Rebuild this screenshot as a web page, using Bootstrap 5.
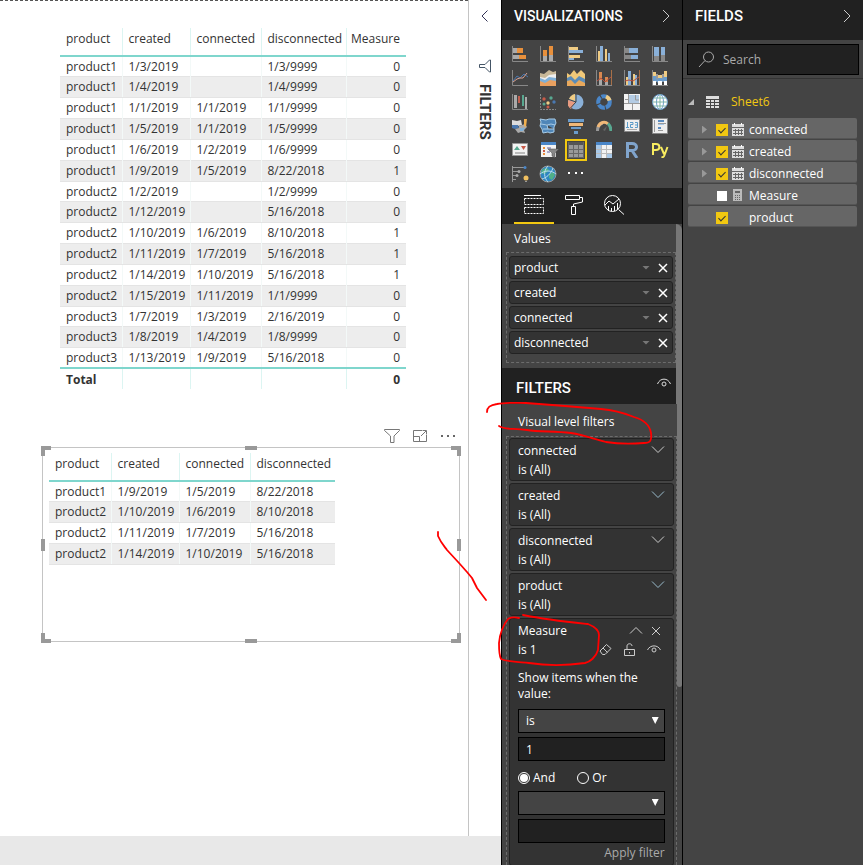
<!DOCTYPE html>
<html lang="en">
<head>
<meta charset="utf-8">
<meta name="viewport" content="width=device-width, initial-scale=1">
<title>Report editor</title>
<link href="https://cdn.jsdelivr.net/npm/bootstrap@5.3.0/dist/css/bootstrap.min.css" rel="stylesheet">
<style>
body{font-family:"Open Sans","Noto Sans",sans-serif;font-size:12px;line-height:16px;color:#333;background:#fff}
button{font:inherit;color:inherit;background:none;border:0;padding:0}
svg{display:block;flex:none}
.pane-title{font-family:Roboto,sans-serif;font-weight:500;font-size:15px;line-height:20px;margin:0;color:#fff}
.title-long{font-size:14px}

/* report canvas */
.report{min-width:0}
.canvas{border-top:1px dashed #555;padding:27px 8px 0 42px;min-width:0}
.strip{width:33px;border-left:1px solid #c4c4c4;color:#333}
.strip .pane-title{writing-mode:vertical-rl;color:#333;line-height:20px;font-weight:700}
.strip-funnel{margin:34px 0 10px}
.pages{height:29px;background:#e8e8e8}
.grid-table{width:auto;table-layout:fixed;margin:0;color:#333;line-height:16px;--bs-table-bg:transparent}
.grid-table>:not(caption)>*>*{padding:1px 3px 0 6px;border-bottom:0;height:21px;white-space:nowrap;box-shadow:none;color:#333;vertical-align:middle;border-right:1px solid #f3f9f8}
.grid-table>:not(caption)>*>.text-end{padding-left:3px;padding-right:6px}
.grid-table>:not(caption)>*>:last-child{border-right:0}
.grid-table>thead>tr>th{height:28px;padding-top:0;padding-bottom:5px;font-weight:400;border-bottom:2px solid #7fd6cd;border-right-color:#dcf5f2}
.grid-table>tbody>tr:nth-child(6n+1)>td{height:20px}
.grid-table>tbody>tr:nth-child(even)>td{background:#ededed;border-top:1px solid #e4e4e4;border-bottom:1px solid #e4e4e4;padding-top:0}
.grid-table>tfoot>tr>*{border-top:2px solid #7fd6cd;font-weight:700;border-right-color:#dcf5f2}
.w-a{width:62px}.w-b{width:68px}.w-c{width:71px}.w-d{width:85px}.w-e{width:60px}
.main-visual{margin-left:18px}
.visual-tools{margin-top:35px;height:23px;padding-right:4px;gap:13px}
.visual{position:relative;border:1px solid #c4c4c4;height:195px;padding:5px 6px}
.handle{position:absolute;background:#999}
.h-t{width:12px;height:4px;left:calc(50% - 6px);top:-2px}
.h-b{width:12px;height:4px;left:calc(50% - 6px);bottom:-2px}
.h-l{width:4px;height:12px;top:calc(50% - 6px);left:-2px}
.h-r{width:4px;height:12px;top:calc(50% - 6px);right:-2px}
.corner{position:absolute;width:10px;height:10px;border:0 solid #999}
.c-tl{left:-2px;top:-2px;border-width:4px 0 0 4px}
.c-tr{right:-2px;top:-2px;border-width:4px 4px 0 0}
.c-bl{left:-2px;bottom:-2px;border-width:0 0 4px 4px}
.c-br{right:-2px;bottom:-2px;border-width:0 4px 4px 0}

/* dark panes */
.pane{background:#444;color:#fff;border-left:1px solid #000;overflow:hidden}
.viz{width:181px}
.fields{width:181px}
.pane-head{height:40px;background:#212121;padding:0 12px;flex:none}
.sub-head{height:36px;padding:4px 5px 0 14px}
.viz-grid{display:grid;grid-template-columns:repeat(6,28px);grid-auto-rows:24px;padding:2px 4px;height:148px}
.viz-grid button{display:flex;align-items:center;justify-content:center}
.viz-grid .picked svg{outline:2px solid #f2c811;outline-offset:1px;background:#333}
.tabs{height:36px;background:#212121;padding-left:12px}
.tabs button{width:40px;border-bottom:2px solid transparent;display:flex;align-items:center;justify-content:center}
.tabs .on{border-color:#f2c811}
.scroller{border-right:6px solid #777}
.scroller-start{border-top-right-radius:6px}
.values-label{margin:0;padding:7px 12px 5px}
.level-label{margin:0;padding:10px 16px 6px}
.well{border:1px dashed #6c6c6c;margin:0 0 5px 4px;padding:3px 2px 6px}
.chip{height:23px;background:#333;border:1px solid #222;border-radius:3px;padding:0 4px;margin-bottom:2px}
.caret{width:8px;height:4px;background:#777;clip-path:polygon(0 0,100% 0,50% 100%)}
.fcard{background:#333;border:1px solid #222;border-radius:3px;padding:2px 8px;line-height:19px;height:43px;margin-bottom:2px}
.fcard.open{height:auto;flex:1 0 auto;margin:0}
.fwell{border:1px dashed #6c6c6c;border-bottom:0;margin:0 0 0 4px;padding:1px 2px 0;min-height:0}
.prompt{margin:11px 0 7px;line-height:16px}
.box{display:block;width:100%;height:24px;border:1px solid #000;border-radius:0;background:#212121;color:#fff;padding:0 7px;font-size:12px;line-height:22px;appearance:none}
.pick{position:relative;margin-bottom:4px}
.pick .box{background:#444}
.pick::after{content:"";position:absolute;right:6px;top:8px;width:7px;height:7px;background:#fff;clip-path:polygon(0 0,100% 0,50% 100%);pointer-events:none}
.join{padding:9px 0 5px;line-height:16px}
.join label{padding:0 22px 0 3px}
.rad{appearance:none;width:12px;height:12px;border:1px solid #fff;border-radius:50%;margin:0;flex:none}
.rad:checked{background:#fff;background-clip:content-box;padding:1px}
.apply{color:#aaa;line-height:20px}
.bar-rest{width:6px;background:#777;height:283px;border-radius:0 0 3px 3px}

.search{margin:4px 4px 3px;height:31px;background:#212121;border:1px solid #000;padding:0 10px}
.search input{background:none;border:0;outline:0;color:#fff;min-width:0;flex:1;padding:0;font-size:12px}
.search input::placeholder{color:#aaa;opacity:1}
.fields-body{border-top:1px solid #333;padding:11px 6px 0 5px}
.sheet{color:#f2c811;height:24px}
.item{height:21px;background:#666;border-radius:2px;border-bottom:1px solid #555;margin-bottom:1px;padding:3px 0 0 14px}
.item>svg,.slot12{margin:0 5px 0 4px}
.twist{width:5px;height:8px;background:#999;clip-path:polygon(0 0,100% 50%,0 100%)}
.slot5{width:5px}.slot12{width:12px}
.tick{appearance:none;width:12px;height:12px;margin:0 0 0 9px;background:#fff;flex:none;display:flex;justify-content:center}
.tick:not(:checked){width:10px;height:10px;margin:0 1px 0 10px}
.tick:checked{background:#f2c811}
.tick:checked::before{content:"";width:4px;height:7px;margin-top:2px;border:solid #333;border-width:0 1px 1px 0;transform:rotate(45deg)}
.ink{position:absolute;right:0;top:0;pointer-events:none}
</style>
<script src="https://cdn.jsdelivr.net/npm/bootstrap@5.3.0/dist/js/bootstrap.bundle.min.js"></script>
</head>
<body>
<div class="d-flex vh-100 overflow-hidden position-relative">

<main class="report flex-grow-1 d-flex flex-column">
  <div class="d-flex flex-grow-1">
    <div class="canvas flex-grow-1">
      <div class="main-visual">
      <table class="table grid-table">
        <colgroup><col class="w-a"><col class="w-b"><col class="w-c"><col class="w-d"><col class="w-e"></colgroup>
        <thead><tr><th>product</th><th>created</th><th>connected</th><th>disconnected</th><th class="text-end">Measure</th></tr></thead>
        <tbody>
        <tr><td>product1</td><td>1/3/2019</td><td></td><td>1/3/9999</td><td class="text-end">0</td></tr>
        <tr><td>product1</td><td>1/4/2019</td><td></td><td>1/4/9999</td><td class="text-end">0</td></tr>
        <tr><td>product1</td><td>1/1/2019</td><td>1/1/2019</td><td>1/1/9999</td><td class="text-end">0</td></tr>
        <tr><td>product1</td><td>1/5/2019</td><td>1/1/2019</td><td>1/5/9999</td><td class="text-end">0</td></tr>
        <tr><td>product1</td><td>1/6/2019</td><td>1/2/2019</td><td>1/6/9999</td><td class="text-end">0</td></tr>
        <tr><td>product1</td><td>1/9/2019</td><td>1/5/2019</td><td>8/22/2018</td><td class="text-end">1</td></tr>
        <tr><td>product2</td><td>1/2/2019</td><td></td><td>1/2/9999</td><td class="text-end">0</td></tr>
        <tr><td>product2</td><td>1/12/2019</td><td></td><td>5/16/2018</td><td class="text-end">0</td></tr>
        <tr><td>product2</td><td>1/10/2019</td><td>1/6/2019</td><td>8/10/2018</td><td class="text-end">1</td></tr>
        <tr><td>product2</td><td>1/11/2019</td><td>1/7/2019</td><td>5/16/2018</td><td class="text-end">1</td></tr>
        <tr><td>product2</td><td>1/14/2019</td><td>1/10/2019</td><td>5/16/2018</td><td class="text-end">1</td></tr>
        <tr><td>product2</td><td>1/15/2019</td><td>1/11/2019</td><td>1/1/9999</td><td class="text-end">0</td></tr>
        <tr><td>product3</td><td>1/7/2019</td><td>1/3/2019</td><td>2/16/2019</td><td class="text-end">0</td></tr>
        <tr><td>product3</td><td>1/8/2019</td><td>1/4/2019</td><td>1/8/9999</td><td class="text-end">0</td></tr>
        <tr><td>product3</td><td>1/13/2019</td><td>1/9/2019</td><td>5/16/2018</td><td class="text-end">0</td></tr>
        </tbody>
        <tfoot><tr><th>Total</th><td></td><td></td><td></td><td class="text-end">0</td></tr></tfoot>
      </table>
      </div>

      <div class="visual-tools d-flex justify-content-end">
        <button type="button" aria-label="Filters on this visual"><svg width="16" height="16" viewBox="0 0 16 16" fill="none" stroke="#777"><path d="M.5 1.500h15v1L10 8v6.500H6.500V8L.5 2.500z"/></svg></button>
        <button type="button" aria-label="Focus mode"><svg width="14" height="16" viewBox="0 0 14 16" fill="none" stroke="#777"><path d="M9 2.500H.5v11h13V7M.5 8.500h6v5M8 8l5-5M9.500 2.500h4v4"/></svg></button>
        <button type="button" aria-label="More options"><svg width="16" height="16" viewBox="0 0 16 16" fill="#666"><path d="M1 7h2v2H1zM7 7h2v2H7zM13 7h2v2h-2z"/></svg></button>
      </div>

      <div class="visual">
        <table class="table grid-table">
          <colgroup><col class="w-a"><col class="w-b"><col class="w-c"><col class="w-d"></colgroup>
          <thead><tr><th>product</th><th>created</th><th>connected</th><th>disconnected</th></tr></thead>
          <tbody>
          <tr><td>product1</td><td>1/9/2019</td><td>1/5/2019</td><td>8/22/2018</td></tr>
          <tr><td>product2</td><td>1/10/2019</td><td>1/6/2019</td><td>8/10/2018</td></tr>
          <tr><td>product2</td><td>1/11/2019</td><td>1/7/2019</td><td>5/16/2018</td></tr>
          <tr><td>product2</td><td>1/14/2019</td><td>1/10/2019</td><td>5/16/2018</td></tr>
          </tbody>
        </table>
        <i class="corner c-tl"></i><i class="corner c-tr"></i><i class="corner c-bl"></i><i class="corner c-br"></i>
        <i class="handle h-t"></i><i class="handle h-b"></i><i class="handle h-l"></i><i class="handle h-r"></i>
      </div>
    </div>
    <aside class="strip d-flex flex-column align-items-center pt-2">
      <button type="button" aria-label="Expand filters"><svg width="16" height="16" viewBox="0 0 16 16" fill="none" stroke="#335"><path d="M10.500 2.500L5 8l5.500 5.500"/></svg></button>
      <svg class="strip-funnel" width="14" height="16" fill="none" stroke="#456"><path d="M12.500 2v12h-1L7 9.500H1.500v-3H7L11.500 2z"/></svg>
      <h2 class="pane-title">FILTERS</h2>
    </aside>
  </div>
  <div class="pages"></div>
</main>

<section class="pane viz flex-shrink-0 d-flex flex-column">
  <header class="pane-head d-flex align-items-center justify-content-between">
    <h2 class="pane-title title-long pb-2">VISUALIZATIONS</h2>
    <button type="button" aria-label="Collapse" class="pb-2"><svg width="8" height="14" viewBox="0 0 8 14" fill="none" stroke="#ccc"><path d="M1 1l6 6-6 6"/></svg></button>
  </header>
  <div class="viz-grid flex-shrink-0">
    <button type="button" aria-label="Stacked bar chart"><svg width="16" height="16"><path d="M.5 0v15.500H16" fill="none" stroke="#888"/><path fill="#aaa" d="M1 2h4v5H1zM1 9h6v4H1z"/><path fill="#e8903c" d="M5 2h6v5H5zM7 9h7v4H7z"/></svg></button>
    <button type="button" aria-label="Stacked column chart"><svg width="16" height="16"><path d="M.5 0v15.500H16" fill="none" stroke="#888"/><path fill="#e8903c" d="M3 4h4v6H3zM9 0h4v9H9z"/><path fill="#aaa" d="M3 10h4v5H3zM9 9h4v6H9z"/></svg></button>
    <button type="button" aria-label="Clustered bar chart"><svg width="16" height="16"><path d="M.5 0v15.500H16" fill="none" stroke="#888"/><path fill="#f0cc84" d="M1 1h9v3H1zM1 9h11v3H1z"/><path fill="#8ab0d8" d="M1 4h14v3H1zM1 12h5v2H1z"/></svg></button>
    <button type="button" aria-label="Clustered column chart"><svg width="16" height="16"><path d="M.5 0v15.500H16" fill="none" stroke="#888"/><path fill="#f0cc84" d="M2 5h2v10H2zM9 3h2v12H9z"/><path fill="#8ab0d8" d="M4 0h3v15H4zM12 7h2v8h-2z"/></svg></button>
    <button type="button" aria-label="100% stacked bar chart"><svg width="16" height="16"><path d="M.5 0v15.500H16" fill="none" stroke="#888"/><path fill="#888" d="M1 2h4v5H1zM1 9h6v4H1z"/><path fill="#8ab0d8" d="M5 2h9v5H5zM7 9h7v4H7z"/></svg></button>
    <button type="button" aria-label="100% stacked column chart"><svg width="16" height="16"><path d="M.5 0v15.500H16" fill="none" stroke="#888"/><path fill="#8ab0d8" d="M2 1h5v9H2zM9 1h4v8H9z"/><path fill="#888" d="M2 10h5v5H2zM9 9h4v6H9z"/></svg></button>

    <button type="button" aria-label="Line chart"><svg width="16" height="16" fill="none"><path d="M.5 0v15.500H16" stroke="#888"/><path d="M1 11l4-5 3 2 4-4 4 3" stroke="#4a78b0"/><path d="M1 12l4-3 3-1 3 0 4-5" stroke="#d8a090"/></svg></button>
    <button type="button" aria-label="Area chart"><svg width="16" height="16"><path fill="#c8b898" d="M0 3l4 1 5-4 4 2 3-1v15H0z"/><path fill="#eee" d="M0 7l5 1 4-3 7-1v11H0z"/><path fill="#7fb0d8" d="M0 8l5 2 4-3 7 1v5H0z"/><path fill="#e8a060" d="M0 11l5 2 5-3 6 1v5H0z"/></svg></button>
    <button type="button" aria-label="Stacked area chart"><svg width="18" height="16"><path fill="#f0c878" d="M0 3l3 2 4-5 3 4 4-4 4 4v12H0z"/><path fill="#5b8cb8" d="M0 8l4-2 4 4 4-4 6 3v7H0z"/><path fill="#e8a85c" d="M0 11l4-1 4 4 4-4 6 3v3H0z"/></svg></button>
    <button type="button" aria-label="Line and stacked column chart"><svg width="16" height="16" fill="none"><path d="M.5 0v15.500H16" stroke="#888"/><path fill="#d88850" d="M3 2h3v8H3zM9 7h3v5H9z"/><path fill="#aaa" d="M3 10h3v5H3zM9 12h3v3H9z"/><path stroke="#b85040" d="M1 11l4-3 4 4 6-5"/><path d="M15.500 0v15" stroke="#a87048"/></svg></button>
    <button type="button" aria-label="Line and clustered column chart"><svg width="16" height="16" fill="none"><path d="M.5 0v15.500H16" stroke="#888"/><path fill="#f0cc84" d="M2 7h2v8H2zM9 4h2v11H9z"/><path fill="#8ab0d8" d="M4 1h3v14H4zM11 5h2v10h-2z"/><path stroke="#b85040" d="M1 11l4-1 4 1 6-4"/><path d="M15.500 0v15" stroke="#a87048"/></svg></button>
    <button type="button" aria-label="Ribbon chart"><svg width="16" height="16"><path d="M.5 0v15.500H16" fill="none" stroke="#888"/><path fill="#999" d="M4 4h2v8H4zM10 4h2v8h-2z"/><path fill="#6a9ccc" d="M1 6h3v5H1zM6 8h4v3H6zM12 7h3v4h-3zM4 8l2 2v3l-2-2zM12 7l-2 2v3l2-1z"/><path fill="#f0cc84" d="M1 2h3v4H1zM6 5h4v3H6zM12 1h3v6h-3z"/><path fill="#fff" d="M1 11h3v4H1zM6 11h4v4H6zM12 11h3v4h-3z"/></svg></button>

    <button type="button" aria-label="Waterfall chart"><svg width="16" height="16"><path d="M.5 0v15.500H16" fill="none" stroke="#888"/><path fill="#aaa" d="M2 1h3v13H2zM13 3h2v12h-2z"/><path fill="#c06050" d="M6 2h2v7H6z"/><path fill="#58a890" d="M10 1h2v11h-2z"/></svg></button>
    <button type="button" aria-label="Scatter chart"><svg width="16" height="16"><path d="M.5 0v15.500H16" fill="none" stroke="#888" stroke-dasharray="2 1"/><g fill="#c85a48"><circle cx="4" cy="5" r="1.700"/><circle cx="8" cy="13" r="1.500"/></g><g fill="#58a890"><circle cx="11" cy="4" r="1.700"/><circle cx="4" cy="10" r="1.500"/></g><circle cx="8" cy="9" r="1.700" fill="#f0cc84"/><circle cx="14" cy="8" r="1.700" fill="#4a78b0"/></svg></button>
    <button type="button" aria-label="Pie chart"><svg width="16" height="16"><circle cx="8" cy="8" r="7.500" fill="#8ab0d8"/><path fill="#f0cc84" d="M7 0v7L1 5a8 8 0 0 1 6-5z"/><path fill="#e89a80" d="M0 6l7 2-4 7a8 8 0 0 1-3-9z"/><path d="M8 0v8L2.500 14M8 8L1 5.500" fill="none" stroke="#444"/></svg></button>
    <button type="button" aria-label="Donut chart"><svg width="16" height="16" fill="none" stroke-width="4"><circle cx="8" cy="8" r="5.800" stroke="#4a86c8" stroke-dasharray="7 1"/><path d="M10 2.500a6 6 0 0 1 3.500 4" stroke="#f0cc84"/></svg></button>
    <button type="button" aria-label="Treemap"><svg width="16" height="16"><path fill="#f3f3f3" d="M0 0h16v16H0z"/><path fill="#b4cce4" d="M5 1h10v8H5z"/><path d="M4.500 0v9M1 5.500h3M11.500 1v5H15M0 9.500h16M8.500 10v6" fill="none" stroke="#999"/></svg></button>
    <button type="button" aria-label="Map"><svg width="16" height="16" fill="none" stroke="#6a9ccc"><circle cx="8" cy="8" r="7.500" fill="#fff"/><ellipse cx="8" cy="8" rx="3.500" ry="7.500"/><path d="M8 0v16M.5 8h15M2 4h12M2 12h12" stroke="#7fb5a5"/></svg></button>

    <button type="button" aria-label="Filled map"><svg width="18" height="16"><path fill="#ddd" d="M1 2l5 1 4-1 1 5-4 1-6-1z"/><path fill="#4a78b0" d="M1 7h6l1 3-4 1-3-1z"/><path fill="#aaa" d="M8 8l6-2 2 3-3 3 1 3-4-1-3 1-3-4 4-1z"/><path fill="#7fb0d8" d="M9 10h5l-2 3H9z"/><path fill="#f0b050" d="M13 1l3 0-1 8-2-1z"/></svg></button>
    <button type="button" aria-label="Shape map"><svg width="18" height="16" fill="#4f86b8" stroke="#a8cce8"><path d="M1 1l6 1 3-1h6l1 4-2 4v5l-4 1-2-1-5 1-1-4-2-3 1-4zM2 6l6 1 4-1 4 1M8 7l1 4 6 0M4 11l5 0"/></svg></button>
    <button type="button" aria-label="Funnel chart"><svg width="16" height="16"><path fill="#6a9ccc" d="M0 1h16v3H0zM3 9h10v2H3zM6 13h4v3H6z"/><path fill="#f0b878" d="M1 5h14v3H1z"/></svg></button>
    <button type="button" aria-label="Gauge"><svg width="16" height="16" fill="none" stroke-width="3"><path d="M1.500 13c0-4 2-7 5-8" stroke="#999"/><path d="M2 9c2-5 7-6 10-3" stroke="#f0b878"/><path d="M12 5.500c2 2 3 4 3 7.500" stroke="#58a890"/><path d="M7 12l4-4-2 5z" fill="#666"/></svg></button>
    <button type="button" aria-label="Card"><svg width="16" height="14"><path fill="#eee" stroke="#888" d="M.5.5h15v12H.5z"/><path d="M3.500 3v5M2 8.500h3M6 3.500h3v2H6.500v3H9M11 3.500h2.500v5H11M11 6h2" fill="none" stroke="#5b9bc8"/><path stroke="#aaa" d="M3 10.500h10"/></svg></button>
    <button type="button" aria-label="Multi-row card"><svg width="16" height="16"><path fill="#eee" stroke="#888" d="M.5.500h15v15H.5z"/><path fill="#5b8cc0" d="M6 2h6v2H6zM6 9h3v2H6z"/><path fill="#999" d="M2 2h1v12H2zM6 5h8v1H6zM6 12h5v1H6z"/><path fill="#a8c8e8" d="M6 6h6v1H6z"/></svg></button>

    <button type="button" aria-label="KPI"><svg width="16" height="14"><path fill="#f3f3f3" stroke="#999" d="M.5.5h15v12H.5z"/><path fill="#58a890" d="M2 7l3-4 3 4z"/><path fill="#c85a48" d="M9 3h5l-2.500 4z"/><path stroke="#bbb" stroke-width="2" d="M3 10h10"/></svg></button>
    <button type="button" aria-label="Slicer"><svg width="18" height="18" class="ms-1"><path fill="#f3f3f3" d="M0 1h15v15H0z"/><path fill="#4a86c8" d="M0 1h15v3H0z"/><path fill="#e8903c" d="M2 6h2v2H2zM2 12h2v2H2z"/><path fill="#c85a48" d="M2 9h2v2H2z"/><path fill="#aac" d="M6 6h4v2H6zM6 10h3v2H6z"/><path fill="#888" stroke="#444" stroke-width=".5" d="M7 8h11l-4 4v5l-3-2v-3z"/></svg></button>
    <button type="button" aria-label="Table" class="picked" aria-pressed="true"><svg width="16" height="16"><path fill="#999" d="M0 0h16v16H0z"/><path fill="#555" d="M0 0h16v3H0z"/><path d="M.5 0v16M5.500 3v13M10.500 3v13M15.500 0v16M0 7.500h16M0 11.500h16M0 15.500h16" stroke="#666"/></svg></button>
    <button type="button" aria-label="Matrix"><svg width="16" height="16"><path fill="#f3f3f3" d="M0 0h16v16H0z"/><path fill="#4a86c8" d="M0 0h16v3H0z"/><path fill="#a8c8e8" d="M0 3h5v13H0zM11 11h5v5h-5z"/><path d="M5.500 3v13M10.500 3v13M0 7.500h16M0 11.500h16" stroke="#bbb"/></svg></button>
    <button type="button" aria-label="R script visual"><svg width="16" height="16" fill="none" stroke="#80a4cc" stroke-width="3"><path d="M3.500 16V1.500H8c6 0 6 7 0 7H4M8 8.500l5 7.500"/></svg></button>
    <button type="button" aria-label="Python visual"><svg width="18" height="16" fill="none" stroke="#f8ec60" stroke-width="2"><path d="M2 13V2h3c4.500 0 4.500 6 0 6H2M10 5l3 7M16.500 5l-3 8c-.5 2-1 2.500-3 2"/></svg></button>

    <button type="button" aria-label="Key influencers"><svg width="18" height="18" fill="none" stroke="#999"><path d="M1.500 1v16M1 2.500h12M1 6.500h7M1 10.500h6M1 14.500h4"/><circle cx="14" cy="2.500" r="1.500" fill="#4a86c8" stroke="none"/><g fill="#aaa" stroke="none"><circle cx="8" cy="6.500" r="1.500"/><circle cx="6" cy="10.500" r="1.500"/></g><circle cx="15" cy="13" r="2.500" fill="#f0c060" stroke="none"/><path d="M14 16.500h2"/></svg></button>
    <button type="button" aria-label="ArcGIS map"><svg width="18" height="18"><circle cx="9" cy="9" r="8" fill="#2e86c0" stroke="#999"/><path fill="#50b088" d="M4 4l4-1 2 2-3 3-3 1-2-2zM10 9l4-2 2 3-3 5-3-2z"/><path d="M1 9c5-4 11-4 16 0M9 1c-5 5-4 12 0 16M3 14c4-1 9-5 11-11" fill="none" stroke="#bde"/></svg></button>
    <button type="button" aria-label="More visuals"><svg width="16" height="16"><path fill="#fff" d="M0 6h2v2H0zM7 6h2v2H7zM13 6h2v2h-2z"/></svg></button>
  </div>
  <div class="tabs d-flex flex-shrink-0">
    <button type="button" class="on" aria-label="Fields"><svg width="20" height="20" fill="none" stroke="#fff"><path d="M0 .5h17"/><path d="M.5 3.500h19v6H.5zM.5 12.500h19v6H.5z" stroke-dasharray="2 1"/></svg></button>
    <button type="button" aria-label="Format"><svg width="18" height="22" fill="none" stroke="#fff"><path d="M.5 1.500h14v4H.5zM14.500 3.500h3v4.500l-9 2v3M6.500 12.500h4v8h-4z"/></svg></button>
    <button type="button" aria-label="Analytics"><svg width="22" height="22" fill="none" stroke="#fff"><circle cx="9.500" cy="9.500" r="8"/><path d="M2 11l4-4 4 3 6-5M5.500 17v-5M8.500 17v-3M11.500 17v-5M14.500 15V9M15.500 15.500l5.500 5"/></svg></button>
  </div>

  <div class="scroller scroller-start flex-shrink-0">
    <p class="values-label">Values</p>
    <div class="well">
      <div class="chip d-flex align-items-center"><span class="flex-grow-1">product</span><i class="caret me-2"></i><button type="button" aria-label="Remove product"><svg width="10" height="10" stroke="#fff" stroke-width="1.500"><path d="M1 1l8 8M9 1L1 9"/></svg></button></div>
      <div class="chip d-flex align-items-center"><span class="flex-grow-1">created</span><i class="caret me-2"></i><button type="button" aria-label="Remove created"><svg width="10" height="10" stroke="#fff" stroke-width="1.500"><path d="M1 1l8 8M9 1L1 9"/></svg></button></div>
      <div class="chip d-flex align-items-center"><span class="flex-grow-1">connected</span><i class="caret me-2"></i><button type="button" aria-label="Remove connected"><svg width="10" height="10" stroke="#fff" stroke-width="1.500"><path d="M1 1l8 8M9 1L1 9"/></svg></button></div>
      <div class="chip d-flex align-items-center"><span class="flex-grow-1">disconnected</span><i class="caret me-2"></i><button type="button" aria-label="Remove disconnected"><svg width="10" height="10" stroke="#fff" stroke-width="1.500"><path d="M1 1l8 8M9 1L1 9"/></svg></button></div>
    </div>
    <div class="pane-head sub-head d-flex align-items-center justify-content-between">
      <h2 class="pane-title">FILTERS</h2>
      <button type="button" class="pb-2" aria-label="Show filters"><svg width="14" height="12" fill="none" stroke="#ddd"><path d="M.5 6C3-.5 11-.5 13.500 6"/><circle cx="7" cy="6" r="2"/></svg></button>
    </div>
  </div>

  <div class="d-flex flex-grow-1 overflow-hidden">
    <div class="flex-grow-1 d-flex flex-column">
      <p class="level-label">Visual level filters</p>
      <div class="fwell d-flex flex-column flex-grow-1">
        <div class="fcard d-flex justify-content-between"><div>connected<br>is (All)</div><button type="button" class="align-self-start pt-1" aria-label="Expand connected"><svg width="14" height="9" fill="none" stroke="#ccc"><path d="M1 1.500l6 6 6-6"/></svg></button></div>
        <div class="fcard d-flex justify-content-between"><div>created<br>is (All)</div><button type="button" class="align-self-start pt-1" aria-label="Expand created"><svg width="14" height="9" fill="none" stroke="#9bc"><path d="M1 1.500l6 6 6-6"/></svg></button></div>
        <div class="fcard d-flex justify-content-between"><div>disconnected<br>is (All)</div><button type="button" class="align-self-start pt-1" aria-label="Expand disconnected"><svg width="14" height="9" fill="none" stroke="#ccc"><path d="M1 1.500l6 6 6-6"/></svg></button></div>
        <div class="fcard d-flex justify-content-between"><div>product<br>is (All)</div><button type="button" class="align-self-start pt-1" aria-label="Expand product"><svg width="14" height="9" fill="none" stroke="#9bc"><path d="M1 1.500l6 6 6-6"/></svg></button></div>
        <div class="fcard open">
          <div class="d-flex align-items-center"><span class="flex-grow-1">Measure</span>
            <button type="button" class="me-2" aria-label="Collapse Measure"><svg width="14" height="9" fill="none" stroke="#ccc"><path d="M1 7.500l6-6 6 6"/></svg></button>
            <button type="button" aria-label="Remove Measure"><svg class="me-1" width="10" height="10" stroke="#ccc"><path d="M1 1l8 8M9 1L1 9"/></svg></button></div>
          <div class="d-flex align-items-center"><span class="flex-grow-1">is 1</span>
            <button type="button" class="me-2 pe-1" aria-label="Clear filter"><svg width="13" height="13" fill="none" stroke="#ccc"><path d="M1 8l6.500-6.500 4.500 4L6 11.500H3.500zM4 5l4.500 4.500"/></svg></button>
            <button type="button" class="me-2 pe-1" aria-label="Lock filter"><svg width="11" height="13" fill="none" stroke="#ccc"><path d="M.5 6.500h10v6H.5zM3 6V3c0-3 5-3 5 0M5.500 9v1.500"/></svg></button>
            <button type="button" class="me-1" aria-label="Hide filter"><svg width="14" height="11" fill="none" stroke="#ccc"><path d="M.5 6C3 .5 11 .5 13.500 6"/><circle cx="7" cy="6" r="2"/></svg></button></div>
          <p class="prompt">Show items when the value:</p>
          <div class="pick"><select class="box" aria-label="First condition"><option>is</option><option>is not</option></select></div>
          <input class="box" type="text" value="1" aria-label="First value">
          <div class="join d-flex align-items-center">
            <input class="rad" type="radio" name="join" id="joinAnd" checked><label for="joinAnd">And</label>
            <input class="rad" type="radio" name="join" id="joinOr"><label for="joinOr">Or</label>
          </div>
          <div class="pick"><select class="box" aria-label="Second condition"><option></option><option>is</option></select></div>
          <input class="box" type="text" aria-label="Second value">
          <button type="button" class="apply d-block ms-auto">Apply filter</button>
        </div>
      </div>
    </div>
    <div class="bar-rest"></div>
  </div>
</section>

<section class="pane fields flex-shrink-0">
  <header class="pane-head d-flex align-items-center justify-content-between">
    <h2 class="pane-title pb-2">FIELDS</h2>
    <button type="button" aria-label="Collapse fields" class="pb-2"><svg width="8" height="14" viewBox="0 0 8 14" fill="none" stroke="#ccc"><path d="M1 1l6 6-6 6"/></svg></button>
  </header>
  <label class="search d-flex align-items-center gap-2"><svg width="17" height="17" fill="none" stroke="#aaa"><circle cx="10.500" cy="6" r="5"/><path d="M7 9.500L1 16"/></svg><input type="text" placeholder="Search" aria-label="Search"></label>
  <div class="fields-body">
    <div class="sheet d-flex align-items-center mb-1"><svg width="6" height="6"><path fill="#bbb" d="M6 0v6H0z"/></svg>
      <svg class="ms-2 me-1" width="17" height="12"><path fill="#ddd" d="M4 0h13v12H4z"/><path stroke="#444" d="M4 3.500h13M4 6.500h13M4 9.500h13M8.500 3v9M12.500 3v9"/></svg><span class="ms-2">Sheet6</span></div>
    <div class="item d-flex align-items-center"><i class="twist"></i><input class="tick" type="checkbox" id="f1" checked><svg width="12" height="13"><path fill="#ddd" d="M0 1h12v12H0z"/><path stroke="#666" d="M0 4.500h12M1 7.500h10M1 10.500h10M3.500 6v6M6.500 6v6M9.500 6v6"/><path stroke="#fff" d="M2.500 0v2M9.500 0v2"/></svg><label for="f1">connected</label></div>
    <div class="item d-flex align-items-center"><i class="twist"></i><input class="tick" type="checkbox" id="f2" checked><svg width="12" height="13"><path fill="#ddd" d="M0 1h12v12H0z"/><path stroke="#666" d="M0 4.500h12M1 7.500h10M1 10.500h10M3.500 6v6M6.500 6v6M9.500 6v6"/><path stroke="#fff" d="M2.500 0v2M9.500 0v2"/></svg><label for="f2">created</label></div>
    <div class="item d-flex align-items-center"><i class="twist"></i><input class="tick" type="checkbox" id="f3" checked><svg width="12" height="13"><path fill="#ddd" d="M0 1h12v12H0z"/><path stroke="#666" d="M0 4.500h12M1 7.500h10M1 10.500h10M3.500 6v6M6.500 6v6M9.500 6v6"/><path stroke="#fff" d="M2.500 0v2M9.500 0v2"/></svg><label for="f3">disconnected</label></div>
    <div class="item d-flex align-items-center"><i class="slot5"></i><input class="tick" type="checkbox" id="f4"><svg width="12" height="13"><path fill="#bbb" d="M1 0h9v12H1z"/><path fill="#666" d="M3 2h5v2H3z"/><path stroke="#666" stroke-dasharray="1 1" d="M3 6.500h6M3 8.500h6M3 10.500h6"/></svg><label for="f4">Measure</label></div>
    <div class="item d-flex align-items-center"><i class="slot5"></i><input class="tick" type="checkbox" id="f5" checked><i class="slot12"></i><label for="f5">product</label></div>
  </div>
</section>

<!-- freehand pen marks over the panes -->
<svg class="ink" width="863" height="865" viewBox="0 0 863 865" fill="none" stroke="#f00" stroke-width="1.800" stroke-linecap="round" stroke-linejoin="round">
  <path d="M487 412c0-5 3-7 10-8 9-2 19-1 29-1l39 3 36 3c13 1 23 4 33 8 10 3 16 9 17 16 1 8-1 10-7 10-12 1-26 1-38-1-12-3-22-7-35-9-17-2-32-1-44-3-15-2-22 0-28-4"/>
  <path d="M438 532v4c3 7 6 10 9 14l12 13 8 9 5 6 5 10 9 12"/>
  <path d="M519 618c-5-1-8-1-11 1-5 6-8 14-9 24 0 6 0 12 2 16 7 3 18 3 28 4 19 3 42 2 56 0 5-1 11-6 13-13l1-15c0-6-6-9-11-11-20-2-41-4-65-9"/>
</svg>
</div>
</body>
</html>
